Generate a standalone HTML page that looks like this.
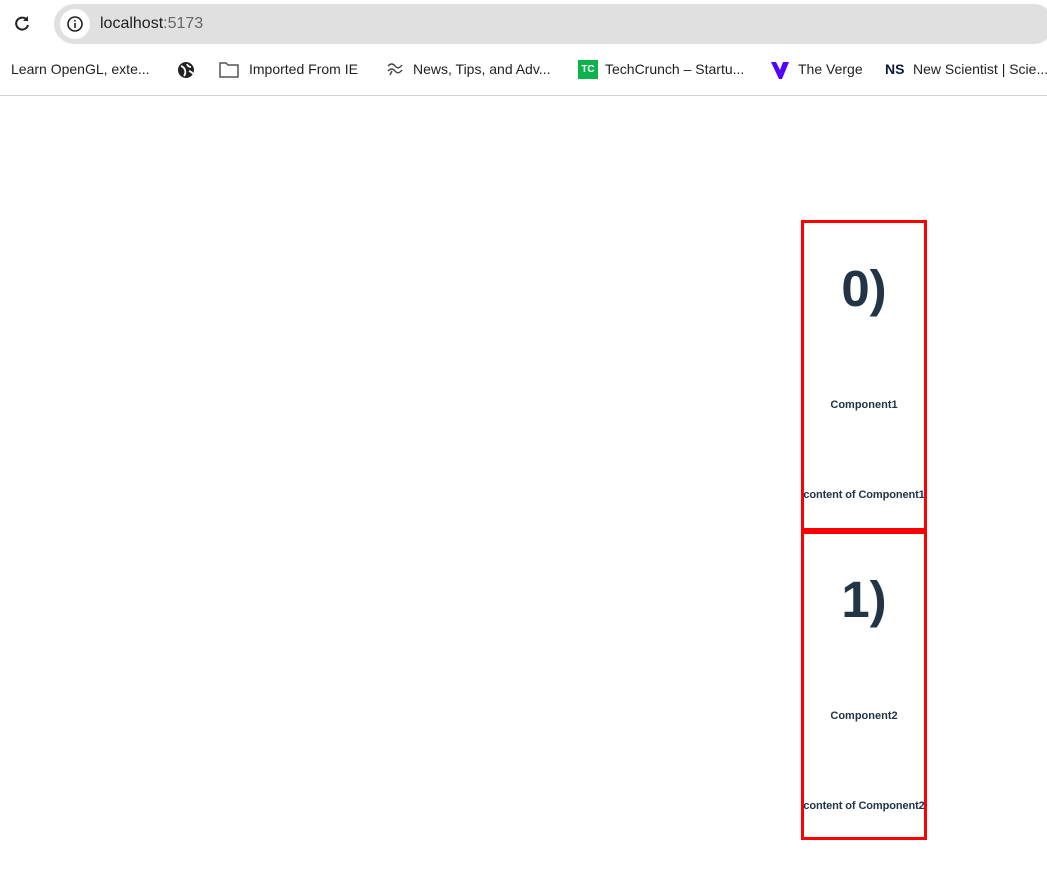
<!DOCTYPE html>
<html><head><style>
body{margin:0;width:1047px;height:874px;overflow:hidden;background:#fff;font-family:"Liberation Sans",sans-serif;position:relative}
.url{position:absolute;left:54px;top:4px;width:1000px;height:40px;border-radius:20px;background:#e0e0e0}
.ic{position:absolute;left:60px;top:9px;width:30px;height:30px;border-radius:50%;background:#fff}
.bm{position:absolute;top:0;height:95px;width:1047px;border-bottom:1px solid #d0d0d0}
.t{position:absolute;font-size:14px;color:#1f1f1f;white-space:nowrap}
.box{position:absolute;left:801px;width:120px;border:3px solid #f00;color:#213547;text-align:center;font-weight:bold}
.num{position:absolute;left:0;right:0;font-size:51px}
.c1{position:absolute;left:-10px;right:-10px;font-size:11px;white-space:nowrap}
</style></head><body>
<div class="bm"></div>
<div class="url"></div>
<div class="ic"></div>
<svg style="position:absolute;left:12px;top:14px" width="20" height="20" viewBox="0 0 20 20"><path d="M15 6A6 6 0 1 0 16 11" fill="none" stroke="#222" stroke-width="2"/><path d="M16 2v5h-5z" fill="#222"/></svg>
<svg style="position:absolute;left:66px;top:15px" width="18" height="18" viewBox="0 0 18 18"><circle cx="9" cy="9" r="7" fill="none" stroke="#222" stroke-width="1.6"/><rect x="8.2" y="8" width="1.6" height="5" fill="#222"/><rect x="8.2" y="5" width="1.6" height="1.6" fill="#222"/></svg>
<div class="t" style="left:100px;top:15px;font-size:16px">localhost<span style="color:#666">:5173</span></div>
<div class="t" style="left:11px;top:61px">Learn OpenGL, exte...</div>
<svg style="position:absolute;left:177px;top:61px" width="18" height="18"><circle cx="9" cy="9" r="8" fill="#222"/><path d="M4 5q3 1 4 4t-1 6M10 3q1 3 4 3M12 10q3 1 4 3" stroke="#fff" stroke-width="1.8" fill="none"/></svg>
<svg style="position:absolute;left:219px;top:61px" width="20" height="17"><path d="M1 2h6l2 2h10v12H1z" fill="none" stroke="#555" stroke-width="1.5"/></svg>
<div class="t" style="left:249px;top:61px">Imported From IE</div>
<svg style="position:absolute;left:386px;top:61px" width="18" height="16"><path d="M2 5q4-4 7 0t7-1M2 10q4-4 7 0t7-1M4 14l2-4" stroke="#444" stroke-width="1.4" fill="none"/></svg>
<div class="t" style="left:413px;top:61px">News, Tips, and Adv...</div>
<div style="position:absolute;left:578px;top:60px;width:20px;height:19px;background:#0cb34d;color:#fff;font-size:10px;font-weight:bold;text-align:center;line-height:19px">TC</div>
<div class="t" style="left:605px;top:61px">TechCrunch – Startu...</div>
<svg style="position:absolute;left:770px;top:60px" width="20" height="20"><path d="M1 2h5l4 8 3-8h6l-7 17h-3z" fill="#5200ff"/></svg>
<div class="t" style="left:798px;top:61px">The Verge</div>
<div class="t" style="left:885px;top:61px;font-weight:bold;color:#0b1a3a">NS</div>
<div class="t" style="left:913px;top:61px">New Scientist | Scie...</div>
<div class="box" style="top:220px;height:305px">
<div class="num" style="top:36px">0)</div>
<div class="c1" style="top:176px">Component1</div>
<div class="c1" style="top:266px;letter-spacing:-0.1px">content of Component1</div>
</div>
<div class="box" style="top:531px;height:303px">
<div class="num" style="top:36px">1)</div>
<div class="c1" style="top:176px">Component2</div>
<div class="c1" style="top:266px;letter-spacing:-0.1px">content of Component2</div>
</div>
</body></html>
